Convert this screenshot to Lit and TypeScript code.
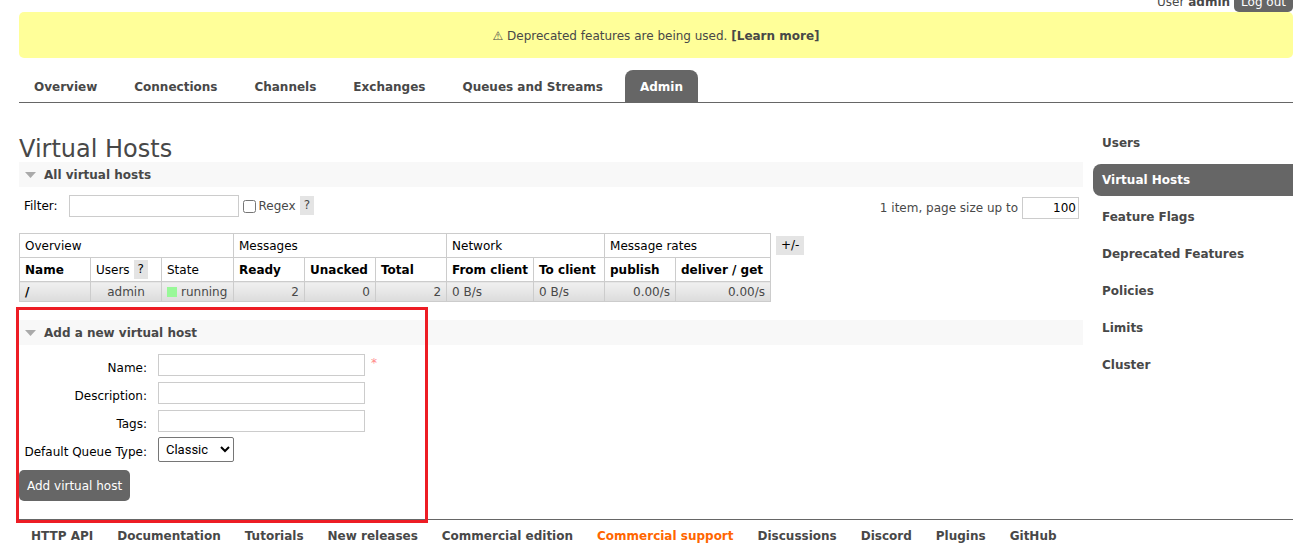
import { LitElement, html, css } from "lit";
import { customElement, state } from "lit/decorators.js";
import { classMap } from "lit/directives/class-map.js";

const TABS = ["Overview", "Connections", "Channels", "Exchanges", "Queues and Streams", "Admin"];

const SIDE_LINKS = [
  "Users",
  "Virtual Hosts",
  "Feature Flags",
  "Deprecated Features",
  "Policies",
  "Limits",
  "Cluster",
];

const FOOTER_LINKS = [
  "HTTP API",
  "Documentation",
  "Tutorials",
  "New releases",
  "Commercial edition",
  "Commercial support",
  "Discussions",
  "Discord",
  "Plugins",
  "GitHub",
];

@customElement("app-root")
export class AppRoot extends LitElement {
  static styles = css`
    :host {
      display: block;
      padding: 0 12px 0 19px;
      font: 12px/18px "DejaVu Sans", Verdana, sans-serif;
      color: #484848;
      background: #fff;
    }
    * {
      box-sizing: border-box;
    }
    a {
      color: inherit;
      font-weight: bold;
      text-decoration: none;
    }
    input,
    button {
      font: inherit;
    }

    /* session strip, scrolled mostly out of view */
    .session {
      display: flex;
      justify-content: flex-end;
      align-items: flex-end;
      gap: 4px;
      height: 12px;
      overflow: hidden;
    }
    .who {
      padding-bottom: 1px;
    }
    .logout {
      padding: 2px 7px 1px;
      border: 0;
      border-radius: 5px;
      background: #666;
      color: #fff;
    }

    .banner {
      padding: 15px 14px 13px;
      border-radius: 5px;
      background: #ff9;
      text-align: center;
    }

    .tabs {
      display: flex;
      gap: 7px;
      margin-top: 12px;
      border-bottom: 1px solid #666;
    }
    .tab {
      padding: 8px 15px 6px;
      border-radius: 8px 8px 0 0;
      line-height: 18px;
    }
    .current {
      background: #666;
      color: #fff;
    }

    .columns {
      display: grid;
      grid-template-columns: minmax(0, 1fr) 200px;
      gap: 10px;
      padding-top: 24px;
    }
    .side {
      display: flex;
      flex-direction: column;
      gap: 5px;
    }
    .side-link {
      padding: 7px 9px;
      border-radius: 8px 0 0 8px;
    }

    h1 {
      margin: 9px 0 0;
      font-size: 24px;
      line-height: 26px;
      font-weight: normal;
    }
    h2 {
      display: flex;
      align-items: center;
      gap: 8px;
      height: 25px;
      margin: 0;
      padding: 0 6px;
      background: #f8f8f8;
      font-size: 12px;
    }
    .arrow {
      width: 11px;
      height: 6px;
      fill: #aaa;
    }

    .filter {
      display: flex;
      align-items: flex-start;
      padding: 8px 4px 14px 5px;
      line-height: 22px;
    }
    label {
      color: #000;
    }
    .field {
      height: 22px;
      padding: 2px;
      border: 1px solid #ccc;
      outline: 0;
      background: #fff;
      color: #000;
      vertical-align: top;
    }
    .filter-text {
      width: 170px;
      margin: 0 4px 0 11px;
    }
    .regex {
      width: 13px;
      height: 13px;
      margin: 5px 3px 0 0;
    }
    .plain {
      color: inherit;
    }
    .help {
      margin: 1px 0 0 4px;
      padding: 0 4px;
      border: 0;
      background: #e4e4e4;
      color: inherit;
      line-height: 19px;
    }
    .paging {
      display: flex;
      gap: 4px;
      margin: 2px 0 0 auto;
    }
    .page-size {
      width: 57px;
      text-align: right;
    }

    .table-row {
      display: flex;
      align-items: flex-start;
      gap: 5px;
    }
    .hosts {
      table-layout: fixed;
      width: 752px;
      border-collapse: collapse;
      white-space: nowrap;
    }
    .narrow {
      width: 71px;
    }
    .state {
      width: 72px;
    }
    .client {
      width: 87px;
    }
    th,
    td {
      height: 20px;
      padding: 0 5px;
      border: 1px solid #ccc;
      line-height: 18px;
      text-align: left;
    }
    th {
      height: 24px;
      color: #000;
    }
    .group {
      font-weight: normal;
    }
    .with-help {
      display: flex;
      align-items: center;
      gap: 4px;
    }
    .with-help .help {
      margin: 0;
    }
    .rows td {
      background: linear-gradient(#f0f0f0, #dcdcdc);
    }
    .rows .center {
      text-align: center;
    }
    .rows .num {
      text-align: right;
    }
    .vhost {
      color: #000;
    }
    .status {
      display: flex;
      align-items: center;
      gap: 4px;
    }
    .dot {
      width: 10px;
      height: 10px;
      background: #98f898;
    }
    .more {
      margin-top: 3px;
      padding: 0 5px;
      border: 0;
      background: #e4e4e4;
      color: #000;
      line-height: 19px;
    }

    .add {
      position: relative;
      margin-top: 18px;
    }
    .highlight {
      position: absolute;
      top: -13px;
      left: -3px;
      width: 412px;
      height: 216px;
      border: 3px solid #ed1c24;
      pointer-events: none;
    }
    .form {
      display: grid;
      grid-template-columns: 128px auto;
      justify-content: start;
      column-gap: 11px;
      row-gap: 4px;
      padding-top: 9px;
    }
    .form label {
      padding-top: 4px;
      line-height: 20px;
      text-align: right;
    }
    .form .field {
      width: 207px;
    }
    .required {
      margin-left: 6px;
      color: #f88;
    }
    .queue-type {
      display: block;
      width: 76px;
      height: 25px;
      margin-top: -1px;
      padding: 0 3px;
      border: 1px solid #767676;
      border-radius: 2px;
      background: #fff;
      color: #000;
      font: 13px Roboto, "Liberation Sans", sans-serif;
    }
    .submit {
      display: block;
      margin-top: 8px;
      padding: 7px 8px 6px;
      border: 0;
      border-radius: 5px;
      background: #666;
      color: #fff;
    }

    .footer {
      display: flex;
      gap: 24px;
      margin-top: 18px;
      padding: 7px 12px 14px;
      border-top: 1px solid #666;
      white-space: nowrap;
    }
    .accent {
      color: #f60;
    }
  `;

  @state() private regex = false;

  private heading(text: string) {
    return html`<h2>
      <svg class="arrow" viewBox="0 0 11 6" aria-hidden="true"><path d="M0 0h11L5.5 6z"></path></svg>
      <span>${text}</span>
    </h2>`;
  }

  private textField(id: string, label: string, required = false) {
    return html`
      <label for=${id}>${label}:</label>
      <div>
        <input class="field" id=${id} type="text" />${required
          ? html`<span class="required">*</span>`
          : ""}
      </div>
    `;
  }

  render() {
    return html`
      <div class="session">
        <span class="who">User <b>admin</b></span>
        <button class="logout">Log out</button>
      </div>
      <div class="banner">⚠ Deprecated features are being used. <a href="#">[Learn more]</a></div>
      <nav class="tabs">
        ${TABS.map(
          (t) => html`<a href="#" class=${classMap({ tab: true, current: t === "Admin" })}>${t}</a>`
        )}
      </nav>

      <div class="columns">
        <main>
          <h1>Virtual Hosts</h1>
          <section>
            ${this.heading("All virtual hosts")}
            <div class="filter">
              <label for="filter">Filter:</label>
              <input class="field filter-text" id="filter" type="text" />
              <input
                class="regex"
                id="regex"
                type="checkbox"
                .checked=${this.regex}
                @change=${() => (this.regex = !this.regex)}
              />
              <label class="plain" for="regex">Regex</label>
              <button class="help">?</button>
              <div class="paging">
                <label class="plain" for="size">1 item, page size up to</label>
                <input class="field page-size" id="size" type="text" value="100" />
              </div>
            </div>
            <div class="table-row">
              <table class="hosts">
                <colgroup>
                  <col class="narrow" span="2" />
                  <col class="state" />
                  <col class="narrow" span="3" />
                  <col class="client" />
                  <col class="narrow" span="2" />
                  <col />
                </colgroup>
                <thead>
                  <tr>
                    <th class="group" colspan="3">Overview</th>
                    <th class="group" colspan="3">Messages</th>
                    <th class="group" colspan="2">Network</th>
                    <th class="group" colspan="2">Message rates</th>
                  </tr>
                  <tr>
                    <th>Name</th>
                    <th class="group">
                      <div class="with-help">Users<button class="help">?</button></div>
                    </th>
                    <th class="group">State</th>
                    <th>Ready</th>
                    <th>Unacked</th>
                    <th>Total</th>
                    <th>From client</th>
                    <th>To client</th>
                    <th>publish</th>
                    <th>deliver / get</th>
                  </tr>
                </thead>
                <tbody class="rows">
                  <tr>
                    <td><a class="vhost" href="#">/</a></td>
                    <td class="center">admin</td>
                    <td><div class="status"><span class="dot"></span>running</div></td>
                    <td class="num">2</td>
                    <td class="num">0</td>
                    <td class="num">2</td>
                    <td>0 B/s</td>
                    <td>0 B/s</td>
                    <td class="num">0.00/s</td>
                    <td class="num">0.00/s</td>
                  </tr>
                </tbody>
              </table>
              <button class="more">+/-</button>
            </div>
          </section>

          <section class="add">
            ${this.heading("Add a new virtual host")}
            <form @submit=${(e: Event) => e.preventDefault()}>
              <div class="form">
                ${this.textField("name", "Name", true)}
                ${this.textField("description", "Description")}
                ${this.textField("tags", "Tags")}
                <label for="type">Default Queue Type:</label>
                <select class="queue-type" id="type">
                  <option>Classic</option>
                  <option>Quorum</option>
                  <option>Stream</option>
                </select>
              </div>
              <button class="submit">Add virtual host</button>
            </form>
            <div class="highlight"></div>
          </section>
        </main>

        <nav class="side">
          ${SIDE_LINKS.map(
            (t) =>
              html`<a href="#" class=${classMap({ "side-link": true, current: t === "Virtual Hosts" })}
                >${t}</a
              >`
          )}
        </nav>
      </div>

      <footer class="footer">
        ${FOOTER_LINKS.map(
          (t) => html`<a href="#" class=${classMap({ accent: t === "Commercial support" })}>${t}</a>`
        )}
      </footer>
    `;
  }
}
